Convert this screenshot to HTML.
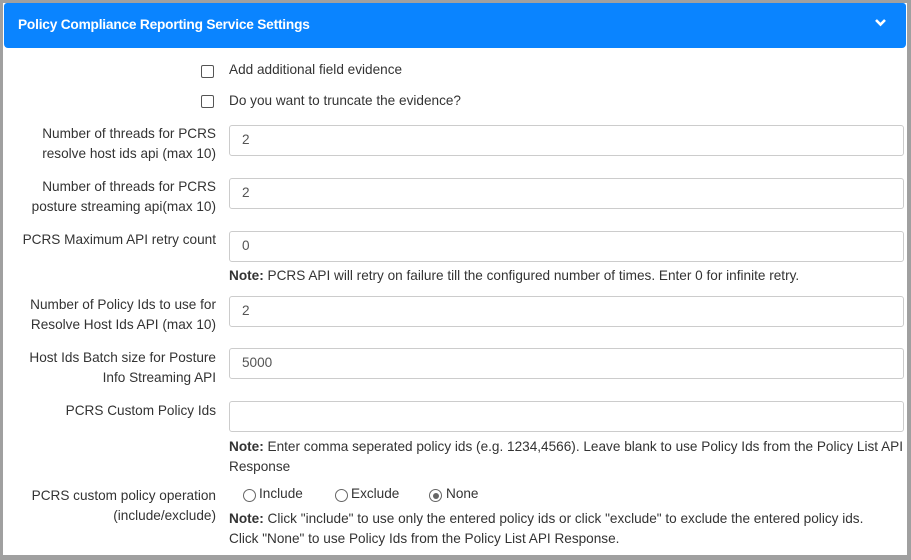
<!DOCTYPE html>
<html><head><style>
body{margin:0;width:911px;height:560px;background:#a0a0a0;font-family:"Liberation Sans",sans-serif;font-size:13.6px;color:#333;position:relative;overflow:hidden}
.panel{position:absolute;left:3px;top:3px;width:904px;height:552px;background:#fff}
.hdr{position:absolute;left:4px;top:3px;width:902px;height:45px;background:#0a84ff;border-radius:3px 3px 4px 4px;color:#fff;font-weight:bold;font-size:13.7px}
.hdr span{position:absolute;left:14px;top:14px;letter-spacing:-0.2px}
.t{position:absolute;white-space:nowrap;line-height:20px}
.l{position:absolute;right:695px;text-align:right;line-height:20px;white-space:nowrap}
.in{position:absolute;left:229px;width:675px;height:31px;border:1px solid #ccc;border-radius:3px;box-sizing:border-box}
.in span{position:absolute;left:12px;top:6px;color:#555}
.cb{position:absolute;left:201px;width:13px;height:13px;border:1px solid #555;border-radius:2px;box-sizing:border-box}
.rd{position:absolute;width:13px;height:13px;border:1px solid #666;border-radius:50%;box-sizing:border-box}
b{font-weight:bold}
</style></head><body>
<div class="panel"></div>
<div class="hdr"><span>Policy Compliance Reporting Service Settings</span>
<svg style="position:absolute;left:870px;top:14px" width="13" height="10" viewBox="0 0 13 10"><path d="M2 3 L6.5 7.5 L11 3" fill="none" stroke="#fff" stroke-width="2.6"/></svg></div>

<div class="cb" style="top:65px"></div><div class="t" style="left:229px;top:60px">Add additional field evidence</div>
<div class="cb" style="top:95px"></div><div class="t" style="left:229px;top:91px">Do you want to truncate the evidence?</div>

<div class="l" style="top:124px">Number of threads for PCRS<br>resolve host ids api (max 10)</div>
<div class="in" style="top:125px"><span>2</span></div>

<div class="l" style="top:177px">Number of threads for PCRS<br>posture streaming api(max 10)</div>
<div class="in" style="top:178px"><span>2</span></div>

<div class="l" style="top:230px">PCRS Maximum API retry count</div>
<div class="in" style="top:231px"><span>0</span></div>
<div class="t" style="left:229px;top:266px"><b>Note:</b> PCRS API will retry on failure till the configured number of times. Enter 0 for infinite retry.</div>

<div class="l" style="top:295px">Number of Policy Ids to use for<br>Resolve Host Ids API (max 10)</div>
<div class="in" style="top:296px"><span>2</span></div>

<div class="l" style="top:348px">Host Ids Batch size for Posture<br>Info Streaming API</div>
<div class="in" style="top:348px"><span>5000</span></div>

<div class="l" style="top:401px">PCRS Custom Policy Ids</div>
<div class="in" style="top:401px"></div>
<div class="t" style="left:229px;top:437px"><b>Note:</b> Enter comma seperated policy ids (e.g. 1234,4566). Leave blank to use Policy Ids from the Policy List API<br>Response</div>

<div class="l" style="top:486px">PCRS custom policy operation<br>(include/exclude)</div>
<div class="rd" style="left:243px;top:489px"></div><div class="t" style="left:259px;top:484px">Include</div>
<div class="rd" style="left:335px;top:489px"></div><div class="t" style="left:351px;top:484px">Exclude</div>
<div class="rd" style="left:429px;top:489px"><div style="position:absolute;left:2.5px;top:2.5px;width:6px;height:6px;border-radius:50%;background:#666"></div></div><div class="t" style="left:446px;top:484px">None</div>
<div class="t" style="left:229px;top:509px"><b>Note:</b> Click "include" to use only the entered policy ids or click "exclude" to exclude the entered policy ids.<br>Click "None" to use Policy Ids from the Policy List API Response.</div>
</body></html>
